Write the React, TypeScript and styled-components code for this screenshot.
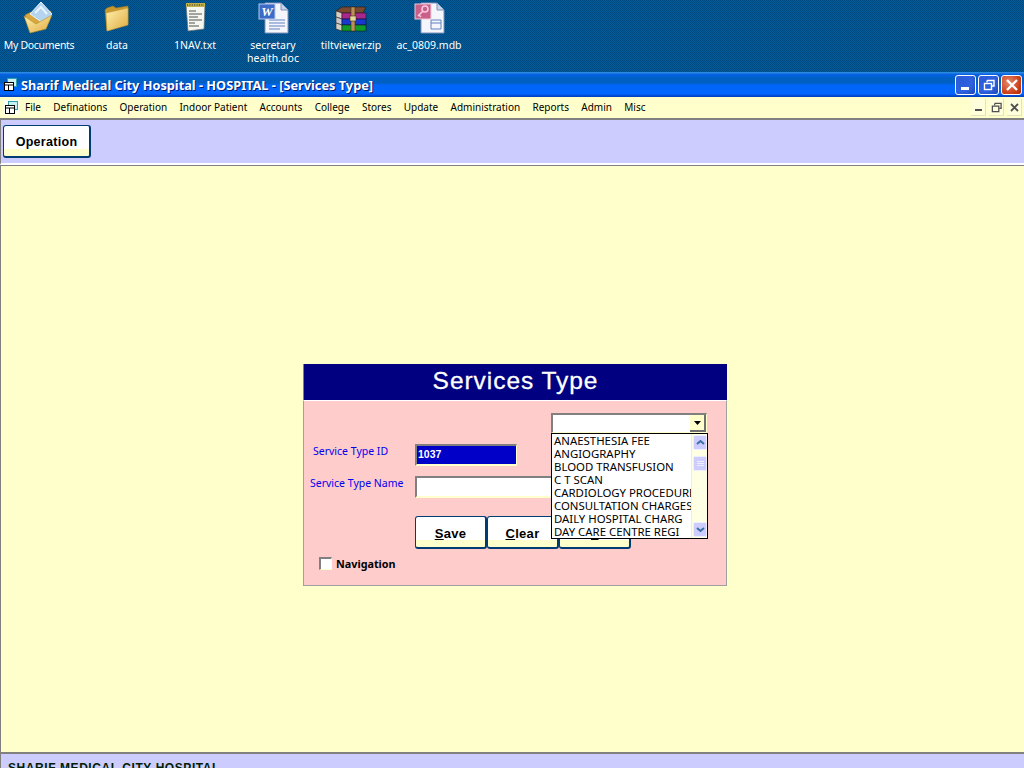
import type { ReactNode } from "react";
import styled, { createGlobalStyle } from "styled-components";

const GlobalStyle = createGlobalStyle`
  html, body {
    margin: 0;
    padding: 0;
    overflow: hidden;
    background: #004e80;
  }
  * {
    box-sizing: border-box;
  }
`;

const Screen = styled.div`
  width: 1024px;
  height: 768px;
  display: flex;
  flex-direction: column;
  overflow: hidden;
  font-family: "Liberation Sans", Arial, sans-serif;
`;

const Desktop = styled.div`
  height: 72px;
  flex: none;
  display: flex;
  background-color: #00508a;
  background-image: repeating-conic-gradient(#005c98 0 25%, #004880 0 50%);
  background-size: 2px 2px;
`;

const DesktopIcon = styled.div<{ $spacing?: number }>`
  width: 78px;
  flex: none;
  display: flex;
  flex-direction: column;
  align-items: center;
  padding-top: 2px;
  color: #fff;
  font-family: "Noto Sans", sans-serif;
  font-size: 10.5px;
  letter-spacing: ${(p) => p.$spacing ?? 0}px;
  line-height: 13px;
  text-align: center;

  & svg {
    display: block;
    margin-bottom: 5px;
  }
`;

const TitleBar = styled.div`
  height: 25px;
  flex: none;
  display: flex;
  align-items: center;
  padding: 0 2px 0 3px;
  background: linear-gradient(
    #2a8ae0 0,
    #2a8ae0 1px,
    #0a62e4 2px,
    #0060d8 4px,
    #0060c0 7px,
    #0060c4 11px,
    #0066f8 13px,
    #0066ff 22px,
    #0044c4 24px
  );
`;

const TitleText = styled.div`
  flex: 1;
  margin-left: 3px;
  color: #fff;
  font-family: "Noto Sans", sans-serif;
  font-weight: 700;
  font-size: 12.75px;
  text-shadow: 1px 1px 0 #00186a;
  white-space: nowrap;
`;

const WinButton = styled.div<{ $close?: boolean }>`
  width: 21px;
  height: 20px;
  margin-left: 2px;
  display: flex;
  align-items: center;
  justify-content: center;
  border: 1px solid #fff;
  border-radius: 3px;
  background: ${(p) =>
    p.$close
      ? "radial-gradient(circle at 35% 35%, #e8886a, #c83c14 70%, #a82c0c)"
      : "radial-gradient(circle at 30% 30%, #2a5ad8, #2f62e0 55%, #1c44b8)"};
`;

const MenuBar = styled.div`
  height: 21px;
  flex: none;
  display: flex;
  align-items: center;
  padding: 0 2px 0 4px;
  background: #ffffcc;
`;

const MenuIcon = styled.div`
  width: 15px;
  height: 15px;
  margin-right: 6px;
  background: #fffff0;
`;

const MenuItem = styled.div`
  margin: 0 12.3px 2px 0;
  font-family: "Noto Sans", sans-serif;
  font-size: 10px;
  color: #000;
  white-space: nowrap;
`;

const MenuSpacer = styled.div`
  flex: 1;
`;

const ChildButton = styled.div`
  width: 15px;
  height: 17px;
  margin-left: 3px;
  display: flex;
  align-items: center;
  justify-content: center;
  background: #ffffdc;
  border-right: 1px solid #e4e4b8;
  border-bottom: 1px solid #e4e4b8;
`;

const ToolBar = styled.div`
  height: 47px;
  flex: none;
  display: flex;
  padding: 5px 0 0 2px;
  background: #ccccff;
  border-top: 2px solid #808080;
  border-left: 1px solid #808080;
  border-bottom: 2px solid #fff;
`;

const FaceButton = styled.div<{ $width: number; $size?: number }>`
  width: ${(p) => p.$width}px;
  height: 33px;
  flex: none;
  display: flex;
  align-items: center;
  justify-content: center;
  padding-top: 2px;
  border: 1px solid #003c74;
  border-radius: 3px;
  border-right-width: 2px;
  border-bottom-width: 2px;
  background: linear-gradient(#fff 0 76%, #ffffcc 76% 100%);
  font-family: "Liberation Sans", Arial, sans-serif;
  font-weight: 700;
  font-size: ${(p) => p.$size ?? 12.5}px;
  letter-spacing: 0.3px;
  color: #000;
`;

const Workspace = styled.div`
  flex: 1;
  padding: 198px 0 0 302px;
  background: #ffffcc;
  border-top: 1px solid #808080;
  border-left: 1px solid #808080;
`;

const FormPanel = styled.div`
  position: relative;
  width: 424px;
  height: 222px;
  display: flex;
  flex-direction: column;
`;

const FormHeader = styled.div`
  height: 36px;
  flex: none;
  display: flex;
  align-items: center;
  justify-content: center;
  padding-bottom: 3px;
  background: #000080;
  border-left: 1px solid #808080;
  color: #fff;
  font-family: "Liberation Sans", Arial, sans-serif;
  font-size: 24.5px;
  letter-spacing: 0.95px;
  -webkit-text-stroke: 0.3px #fff;
`;

const FormBody = styled.div`
  flex: 1;
  display: flex;
  flex-direction: column;
  padding: 43px 0 0 6px;
  background: #ffcccc;
  border-top: 1px solid #fff;
  border-left: 1px solid #a0a0a0;
  border-right: 1px solid #a0a0a0;
  border-bottom: 1px solid #a0a0a0;
`;

const FieldRow = styled.div<{ $height: number }>`
  height: ${(p) => p.$height}px;
  display: flex;
`;

const FieldLabel = styled.div<{ $indent?: number }>`
  width: 105px;
  padding-left: ${(p) => p.$indent ?? 0}px;
  color: #0000f0;
  font-family: "Noto Sans", sans-serif;
  font-size: 10.5px;
  white-space: nowrap;
`;

const IdInput = styled.div`
  width: 102px;
  height: 22px;
  padding: 2px 0 0 1px;
  background: #0000c8;
  border-top: 2px solid #808080;
  border-left: 2px solid #808080;
  border-right: 1px solid #ffffcc;
  border-bottom: 2px solid #ffffcc;
  color: #fff;
  font-weight: 700;
  font-size: 10.5px;
`;

const NameInput = styled.div`
  width: 150px;
  height: 22px;
  background: #fff;
  border-top: 2px solid #808080;
  border-left: 2px solid #808080;
  border-bottom: 2px solid #ffffcc;
`;

const ButtonRow = styled.div`
  display: flex;
  margin: 17px 0 0 105px;
`;

const NavRow = styled.div`
  display: flex;
  align-items: center;
  margin: 7px 0 0 9px;
  font-family: "Noto Sans", sans-serif;
  font-weight: 700;
  font-size: 10.8px;
  color: #000;
`;

const CheckBox = styled.div`
  width: 13px;
  height: 13px;
  margin-right: 4px;
  background: #fff;
  border-top: 2px solid #808080;
  border-left: 2px solid #808080;
  border-right: 1px solid #ffffcc;
  border-bottom: 1px solid #ffffcc;
`;

const ComboBox = styled.div`
  position: absolute;
  left: 248px;
  top: 49px;
  width: 156px;
  height: 20px;
  display: flex;
  justify-content: flex-end;
  background: #fff;
  border-top: 2px solid #808080;
  border-left: 2px solid #808080;
  border-right: 1px solid #ffffcc;
  border-bottom: 1px solid #ffffcc;
`;

const ComboArrow = styled.div`
  width: 16px;
  height: 17px;
  display: flex;
  align-items: center;
  justify-content: center;
  background: #ffffcc;
  border-right: 2px solid #707070;
  border-bottom: 2px solid #707070;
`;

const DropList = styled.div`
  position: absolute;
  left: 248px;
  top: 69px;
  width: 157px;
  height: 106px;
  display: flex;
  background: #fff;
  border: 1px solid #000;
`;

const DropItems = styled.div`
  width: 139px;
  overflow: hidden;
  padding-left: 2px;
`;

const DropItem = styled.div`
  height: 13px;
  font-family: "Noto Sans", sans-serif;
  font-size: 11.4px;
  line-height: 13px;
  color: #000;
  white-space: nowrap;
`;

const ScrollTrack = styled.div`
  flex: 1;
  display: flex;
  flex-direction: column;
  justify-content: space-between;
  padding: 1px 0 1px 1px;
  background: #ffffe4;
  border-left: 1px solid #f0f0d0;
`;

const ScrollPart = styled.div<{ $offset?: number }>`
  height: 15px;
  margin-top: ${(p) => p.$offset ?? 0}px;
  display: flex;
  align-items: center;
  justify-content: center;
  background: #ccccff;
  border: 1px solid #eef;
  border-radius: 2px;
`;

const ScrollTop = styled.div`
  display: flex;
  flex-direction: column;
`;

const StatusBar = styled.div`
  height: 16px;
  flex: none;
  overflow: hidden;
  padding: 8px 0 0 7px;
  background: #ccccff;
  border-top: 2px solid #808080;
  border-left: 1px solid #808080;
  color: #002000;
  font-family: "Liberation Sans", Arial, sans-serif;
  font-weight: 700;
  font-size: 12px;
  letter-spacing: 0.57px;
  line-height: 13px;
  white-space: nowrap;
`;

const menuItems = [
  "File",
  "Definations",
  "Operation",
  "Indoor Patient",
  "Accounts",
  "College",
  "Stores",
  "Update",
  "Administration",
  "Reports",
  "Admin",
  "Misc",
];

const services = [
  "ANAESTHESIA FEE",
  "ANGIOGRAPHY",
  "BLOOD TRANSFUSION",
  "C T SCAN",
  "CARDIOLOGY PROCEDURES",
  "CONSULTATION CHARGES",
  "DAILY HOSPITAL CHARG",
  "DAY CARE CENTRE REGI",
];

function FolderGradient({ id }: { id: string }) {
  return (
    <defs>
      <linearGradient id={id} x1="0" y1="0" x2="1" y2="1">
        <stop offset="0" stopColor="#fff2b0" />
        <stop offset="1" stopColor="#e0aa40" />
      </linearGradient>
    </defs>
  );
}

function OpenFolderIcon() {
  return (
    <svg width="32" height="32" viewBox="0 0 32 32">
      <FolderGradient id="openFolder" />
      <path d="M2 13 L8 10 L14 14 L28 9 L26 20 L8 28 Z" fill="#d8a840" stroke="#a87c20" strokeWidth="0.6" />
      <path d="M7 12 L18 0 L29 12 L20 21 Z" fill="#b4d4f0" stroke="#e8f4ff" />
      <path d="M12 11 L18 5 L24 12" fill="none" stroke="#e8f4ff" strokeWidth="2" />
      <path d="M1 14 L13 22 L29 13 L23 27 L7 31 Z" fill="url(#openFolder)" stroke="#b88c28" strokeWidth="0.6" />
    </svg>
  );
}

function FolderIcon() {
  return (
    <svg width="32" height="32" viewBox="0 0 32 32">
      <FolderGradient id="closedFolder" />
      <path d="M4 8 L6 6 L12 4 L15 6 L27 4 L27 22 L6 29 Z" fill="#c89830" stroke="#a07820" strokeWidth="0.6" />
      <path d="M5 11 L27 6 L27 23 L6 29 Z" fill="url(#closedFolder)" stroke="#c89830" strokeWidth="0.6" />
    </svg>
  );
}

function NoteIcon() {
  return (
    <svg width="32" height="32" viewBox="0 0 32 32">
      <path d="M7 2 H26 L25 27 L9 29 Z" fill="#f6f6f0" stroke="#707070" strokeWidth="0.7" />
      <path d="M7 1 H26 V5 H7 Z" fill="#c0b050" />
      <path d="M8 3 H25" stroke="#605020" strokeWidth="1.4" strokeDasharray="1 1.4" />
      <path d="M10 9 H17 M10 12 H23 M10 15 H19 M10 18 H23 M10 21 H16 M10 24 H20" stroke="#505050" strokeWidth="1" />
    </svg>
  );
}

function PageIcon({ children }: { children: ReactNode }) {
  return (
    <svg width="32" height="32" viewBox="0 0 32 32">
      <path d="M8 1 H24 L31 8 V31 H8 Z" fill="#f4f6fc" stroke="#8090b8" />
      <path d="M24 1 V8 H31" fill="#c8d4ec" stroke="#8090b8" />
      {children}
    </svg>
  );
}

function WordIcon() {
  return (
    <PageIcon>
      <path d="M12 18 H28 M12 21 H28 M12 24 H28 M12 27 H23" stroke="#6080c0" strokeWidth="1" />
      <rect x="2" y="2" width="16" height="15" fill="#3c6cc8" stroke="#b8c8ec" />
      <text x="10" y="14" textAnchor="middle" fill="#fff" fontFamily="Liberation Serif" fontWeight="700" fontStyle="italic" fontSize="13">
        W
      </text>
    </PageIcon>
  );
}

function AccessIcon() {
  return (
    <PageIcon>
      <path d="M18 18 H28 V27 H18 Z M18 21 H28" fill="none" stroke="#6080c0" strokeWidth="1" />
      <rect x="2" y="2" width="16" height="15" fill="#c86088" stroke="#f0c8d8" />
      <circle cx="12" cy="7" r="3" fill="none" stroke="#f8c8e0" strokeWidth="1.6" />
      <path d="M10 9 L5 14 M6 13 L8 15" stroke="#f8c8e0" strokeWidth="1.6" />
    </PageIcon>
  );
}

function ArchiveIcon() {
  return (
    <svg width="32" height="32" viewBox="0 0 32 32">
      <path d="M1 9 L7 5 H31 L28 11 H7 Z" fill="#7a4a30" stroke="#2c1810" strokeWidth="0.6" />
      <path d="M1 9 L7 11 V17 L1 15 Z" fill="#d8d0c8" stroke="#302820" strokeWidth="0.6" />
      <rect x="7" y="11" width="24" height="6" fill="#a8288c" stroke="#301030" strokeWidth="0.6" />
      <path d="M1 15 L7 17 V23 L1 21 Z" fill="#c8c8d0" stroke="#302820" strokeWidth="0.6" />
      <rect x="7" y="17" width="24" height="6" fill="#1838d0" stroke="#101030" strokeWidth="0.6" />
      <path d="M1 21 L7 23 V29 L1 27 Z" fill="#d0d0c8" stroke="#302820" strokeWidth="0.6" />
      <rect x="7" y="23" width="24" height="6" fill="#109a28" stroke="#102010" strokeWidth="0.6" />
      <rect x="16" y="5" width="4" height="24" fill="#b89058" stroke="#403018" strokeWidth="0.6" />
      <rect x="15" y="14" width="6" height="5" fill="#e8d8a0" stroke="#403018" strokeWidth="0.6" />
    </svg>
  );
}

function RestoreGlyph({ color, size }: { color: string; size: number }) {
  return (
    <svg width={size} height={size} viewBox="0 0 12 12">
      <path d="M4 1.5 H11 V7 H9 M4 1.5 V3.5" fill="none" stroke={color} strokeWidth="1.4" />
      <rect x="1.5" y="4.5" width="7" height="6" fill="none" stroke={color} strokeWidth="1.4" />
    </svg>
  );
}

function AppGlyph() {
  return (
    <svg width="15" height="15" viewBox="0 0 15 15">
      <rect x="4.5" y="1.5" width="9" height="8" fill="#c8f0f0" stroke="#30a0b0" />
      <rect x="1.5" y="5.5" width="9" height="8" fill="#fff" stroke="#000" />
      <path d="M1.5 8 H10.5 M5.5 8 V13.5" stroke="#000" />
    </svg>
  );
}

function App() {
  return (
    <Screen>
      <GlobalStyle />
      <Desktop>
        <DesktopIcon $spacing={-0.3}>
          <OpenFolderIcon />
          My Documents
        </DesktopIcon>
        <DesktopIcon>
          <FolderIcon />
          data
        </DesktopIcon>
        <DesktopIcon>
          <NoteIcon />
          1NAV.txt
        </DesktopIcon>
        <DesktopIcon>
          <WordIcon />
          secretary
          <br />
          health.doc
        </DesktopIcon>
        <DesktopIcon>
          <ArchiveIcon />
          tiltviewer.zip
        </DesktopIcon>
        <DesktopIcon>
          <AccessIcon />
          ac_0809.mdb
        </DesktopIcon>
      </Desktop>

      <TitleBar>
        <AppGlyph />
        <TitleText>Sharif Medical City Hospital - HOSPITAL - [Services Type]</TitleText>
        <WinButton>
          <svg width="13" height="13" viewBox="0 0 13 13">
            <rect x="2" y="9" width="8" height="3" fill="#fff" />
          </svg>
        </WinButton>
        <WinButton>
          <RestoreGlyph color="#fff" size={12} />
        </WinButton>
        <WinButton $close>
          <svg width="14" height="14" viewBox="0 0 14 14">
            <path d="M2 2 L12 12 M12 2 L2 12" stroke="#fff" strokeWidth="2.4" />
          </svg>
        </WinButton>
      </TitleBar>

      <MenuBar>
        <MenuIcon>
          <AppGlyph />
        </MenuIcon>
        {menuItems.map((item) => (
          <MenuItem key={item}>{item}</MenuItem>
        ))}
        <MenuSpacer />
        <ChildButton>
          <svg width="9" height="9" viewBox="0 0 9 9">
            <rect x="1" y="6" width="7" height="2" fill="#505050" />
          </svg>
        </ChildButton>
        <ChildButton>
          <RestoreGlyph color="#505050" size={11} />
        </ChildButton>
        <ChildButton>
          <svg width="9" height="9" viewBox="0 0 9 9">
            <path d="M1 1 L8 8 M8 1 L1 8" stroke="#505050" strokeWidth="1.8" />
          </svg>
        </ChildButton>
      </MenuBar>

      <ToolBar>
        <FaceButton $width={88}>Operation</FaceButton>
      </ToolBar>

      <Workspace>
        <FormPanel>
          <FormHeader>Services Type</FormHeader>
          <FormBody>
            <FieldRow $height={32}>
              <FieldLabel $indent={3}>Service Type ID</FieldLabel>
              <IdInput>1037</IdInput>
            </FieldRow>
            <FieldRow $height={23}>
              <FieldLabel>Service Type Name</FieldLabel>
              <NameInput />
            </FieldRow>
            <ButtonRow>
              <FaceButton $width={72} $size={13}>
                <span>
                  <u>S</u>ave
                </span>
              </FaceButton>
              <FaceButton $width={72} $size={13}>
                <span>
                  <u>C</u>lear
                </span>
              </FaceButton>
              <FaceButton $width={72} $size={13}>
                <span>
                  E<u>x</u>it
                </span>
              </FaceButton>
            </ButtonRow>
            <NavRow>
              <CheckBox />
              Navigation
            </NavRow>
          </FormBody>
          <ComboBox>
            <ComboArrow>
              <svg width="7" height="4" viewBox="0 0 7 4">
                <path d="M0 0 H7 L3.5 4 Z" fill="#000" />
              </svg>
            </ComboArrow>
          </ComboBox>
          <DropList>
            <DropItems>
              {services.map((s) => (
                <DropItem key={s}>{s}</DropItem>
              ))}
            </DropItems>
            <ScrollTrack>
              <ScrollTop>
                <ScrollPart>
                  <svg width="9" height="7" viewBox="0 0 9 7">
                    <path d="M1 5 L4.5 2 L8 5" fill="none" stroke="#3a6ea5" strokeWidth="2" />
                  </svg>
                </ScrollPart>
                <ScrollPart $offset={6}>
                  <svg width="7" height="6" viewBox="0 0 7 6">
                    <path d="M0 0.5 H7 M0 2.5 H7 M0 4.5 H7" stroke="#eef" />
                  </svg>
                </ScrollPart>
              </ScrollTop>
              <ScrollPart>
                <svg width="9" height="7" viewBox="0 0 9 7">
                  <path d="M1 2 L4.5 5 L8 2" fill="none" stroke="#3a6ea5" strokeWidth="2" />
                </svg>
              </ScrollPart>
            </ScrollTrack>
          </DropList>
        </FormPanel>
      </Workspace>

      <StatusBar>SHARIF MEDICAL CITY HOSPITAL</StatusBar>
    </Screen>
  );
}

export default App;
